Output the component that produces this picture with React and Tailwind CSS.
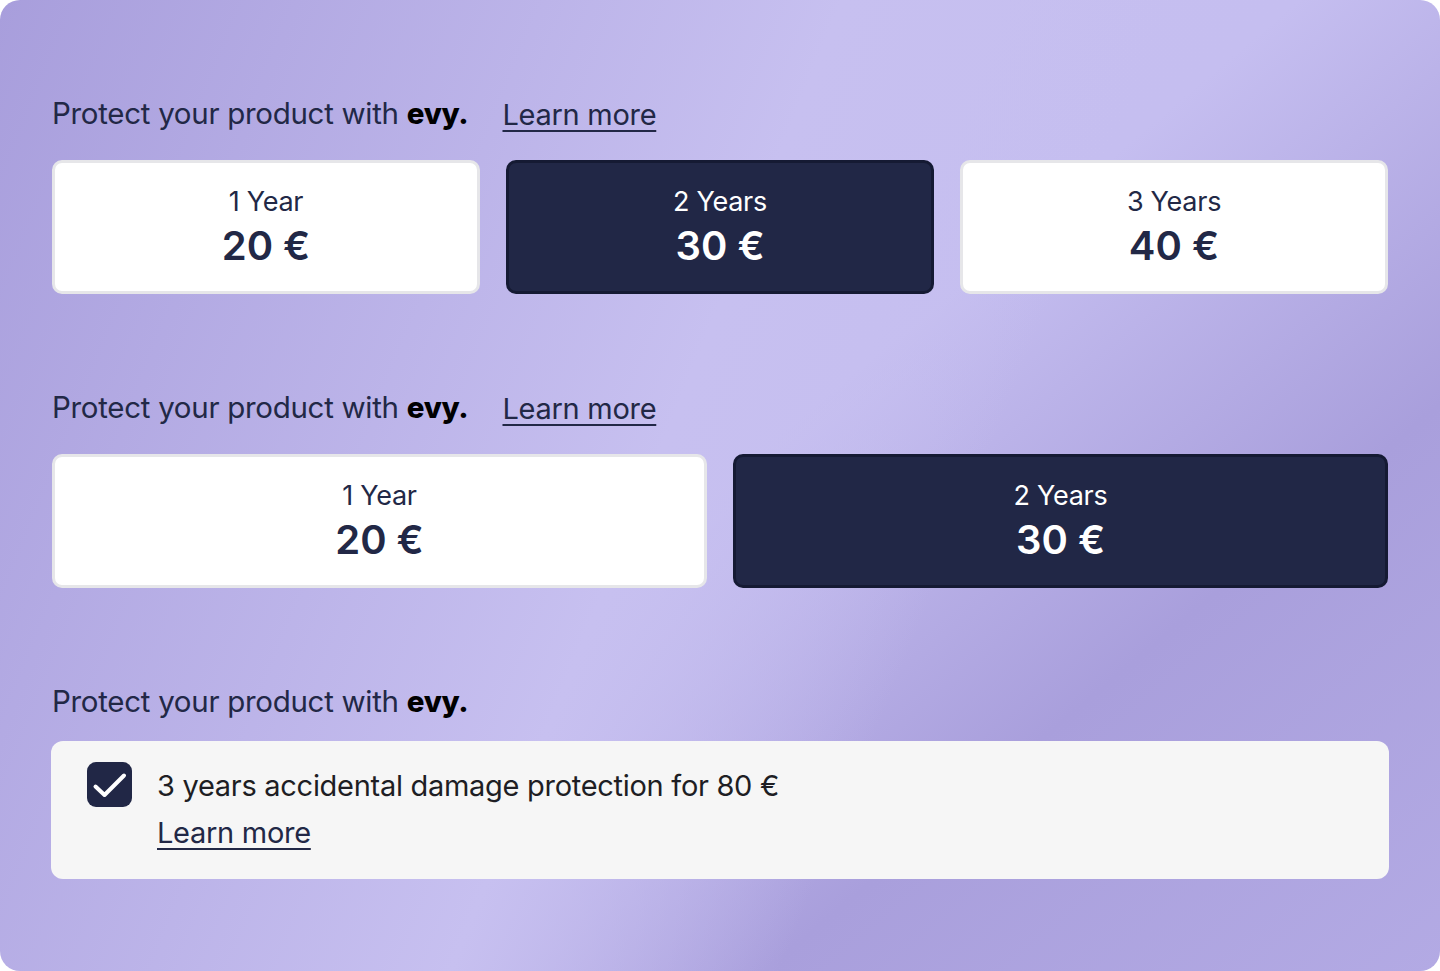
const Card = ({ label, price, selected }) => (
  <div
    className={
      selected
        ? 'flex-1 h-[134px] rounded-[10px] border-[3px] border-[#151a33] bg-[#212746] text-white flex flex-col items-center justify-center'
        : 'flex-1 h-[134px] rounded-[10px] border-[3px] border-[#e6e6e9] bg-white text-[#222846] flex flex-col items-center justify-center'
    }
  >
    <div className="text-[27px] leading-[34px] tracking-[-0.01em]">{label}</div>
    <div className="text-[40px] leading-[46px] font-semibold mt-[4px]">{price}</div>
  </div>
);

const Heading = ({ link }) => (
  <div className="flex items-center h-[42px] whitespace-nowrap">
    <span className="text-[29.5px] leading-[42px] text-[#222846] tracking-[-0.01em]">
      Protect your product with <span className="font-extrabold text-black">evy.</span>
    </span>
    {link && (
      <a href="#" className="ml-[34px] mt-[4px] text-[29px] leading-[42px] text-[#222846] tracking-[-0.01em] underline underline-offset-[5px] decoration-2">
        Learn more
      </a>
    )}
  </div>
);

export default function App() {
  return (
    <div className="w-[1440px] h-[971px] bg-white" style={{ fontFamily: 'Inter, "Noto Sans", sans-serif' }}>
      <div className="w-full h-full rounded-[20px] bg-[linear-gradient(112deg,#a89edc_0%,#c7c0f0_46%,rgba(199,192,240,0)_64%),linear-gradient(140deg,#c7c0f0_0%,#c5bef0_50%,#a99fdc_74%,#b3aae4_100%)] px-[52px] pt-[92px]">
        <Heading link />
        <div className="flex gap-[26px] mt-[26px]">
          <Card label="1 Year" price="20 €" />
          <Card label="2 Years" price="30 €" selected />
          <Card label="3 Years" price="40 €" />
        </div>

        <div className="mt-[92px]">
          <Heading link />
        </div>
        <div className="flex gap-[26px] mt-[26px]">
          <Card label="1 Year" price="20 €" />
          <Card label="2 Years" price="30 €" selected />
        </div>

        <div className="mt-[92px]">
          <Heading />
        </div>
        <div className="mt-[19px] -mx-px rounded-[12px] bg-[#f6f6f6] h-[138px] flex items-start px-[36px] pt-[21px]">
          <div className="w-[45px] h-[45px] rounded-[9px] bg-[#212746] shrink-0">
            <svg width="45" height="45" viewBox="0 0 45 45" fill="none" stroke="white" strokeWidth="4" strokeLinecap="round" strokeLinejoin="round">
              <path d="M8.5 24.5l9 8.5L37 13.5" />
            </svg>
          </div>
          <div className="ml-[25px] pt-[2px] text-[29px] text-[#1e1e24] tracking-[-0.01em]">
            <div className="leading-[44px]">3 years accidental damage protection for 80 €</div>
            <a href="#" className="block mt-[5px] leading-[40px] text-[#222846] underline underline-offset-[5px] decoration-2 w-fit">
              Learn more
            </a>
          </div>
        </div>
      </div>
    </div>
  );
}
